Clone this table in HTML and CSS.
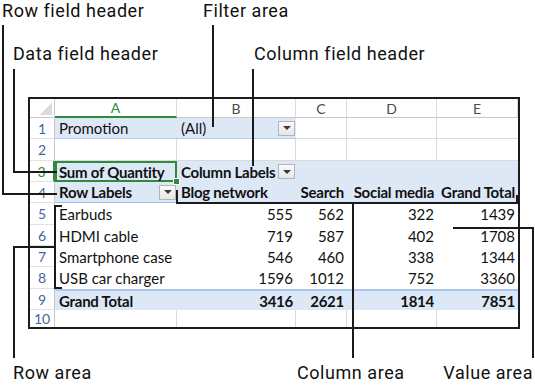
FILE: index.html
```html
<!DOCTYPE html>
<html>
<head>
<meta charset="utf-8">
<link rel="stylesheet" href="styles.css">
</head>
<body>
<div class="figure">
  <div class="sheet">
    <div class="corner"></div>
    <div class="hd hd-sel">A</div>
    <div class="hd">B</div>
    <div class="hd">C</div>
    <div class="hd">D</div>
    <div class="hd">E</div>

    <div class="rn">1</div>
    <div class="c pf">Promotion</div>
    <div class="c pf split"><span>(All)</span><span class="dd"></span></div>
    <div class="c g"></div>
    <div class="c g"></div>
    <div class="c g"></div>

    <div class="rn">2</div>
    <div class="c g"></div>
    <div class="c g"></div>
    <div class="c g"></div>
    <div class="c g"></div>
    <div class="c g"></div>

    <div class="rn rn-sel">3</div>
    <div class="c ph b active">Sum of Quantity<span class="handle"></span></div>
    <div class="c ph b split"><span>Column Labels</span><span class="dd"></span></div>
    <div class="c ph"></div>
    <div class="c ph"></div>
    <div class="c ph"></div>

    <div class="rn">4</div>
    <div class="c ph ph4 b split"><span>Row Labels</span><span class="dd"></span></div>
    <div class="c ph ph4 b">Blog network</div>
    <div class="c ph ph4 b num">Search</div>
    <div class="c ph ph4 b num">Social media</div>
    <div class="c ph ph4 b num">Grand Total</div>

    <div class="rn">5</div>
    <div class="c">Earbuds</div>
    <div class="c num">555</div>
    <div class="c num">562</div>
    <div class="c num">322</div>
    <div class="c num">1439</div>

    <div class="rn">6</div>
    <div class="c">HDMI cable</div>
    <div class="c num">719</div>
    <div class="c num">587</div>
    <div class="c num">402</div>
    <div class="c num">1708</div>

    <div class="rn">7</div>
    <div class="c">Smartphone case</div>
    <div class="c num">546</div>
    <div class="c num">460</div>
    <div class="c num">338</div>
    <div class="c num">1344</div>

    <div class="rn">8</div>
    <div class="c">USB car charger</div>
    <div class="c num">1596</div>
    <div class="c num">1012</div>
    <div class="c num">752</div>
    <div class="c num">3360</div>

    <div class="rn">9</div>
    <div class="c gt b">Grand Total</div>
    <div class="c gt b num">3416</div>
    <div class="c gt b num">2621</div>
    <div class="c gt b num">1814</div>
    <div class="c gt b num">7851</div>

    <div class="rn rn-last">10</div>
    <div class="c g g-last"></div>
    <div class="c g g-last"></div>
    <div class="c g g-last"></div>
    <div class="c g g-last"></div>
    <div class="c g g-last"></div>
  </div>

  <div class="lbl lbl-rfh">Row field header</div>
  <div class="lbl lbl-fa">Filter area</div>
  <div class="lbl lbl-dfh">Data field header</div>
  <div class="lbl lbl-cfh">Column field header</div>
  <div class="lbl lbl-ra">Row area</div>
  <div class="lbl lbl-ca">Column area</div>
  <div class="lbl lbl-va">Value area</div>

  <div class="ln ln-rfh"></div>
  <div class="ln ln-fa"></div>
  <div class="ln ln-dfh"></div>
  <div class="ln ln-cfh"></div>
  <div class="ln ln-ra-br"></div>
  <div class="ln ln-ra"></div>
  <div class="ln ln-ca-br"></div>
  <div class="ln ln-ca"></div>
  <div class="ln ln-va"></div>
</div>
</body>
</html>
```

FILE: styles.css
```css
html, body {
  margin: 0;
  padding: 0;
  background: #ffffff;
}

.figure {
  position: relative;
  width: 535px;
  height: 386px;
  box-sizing: border-box;
  padding: 97px 0 0 28px;
  overflow: hidden;
  background: #ffffff;
}

/* ---------- spreadsheet ---------- */
.sheet {
  display: grid;
  grid-template-columns: 25px 122px 119px 51px 90px 81px;
  grid-template-rows: 19px 21px 22px 21px 21px 22px 21px 21px 22px 21px 17px;
  width: 492px;
  height: 232px;
  box-sizing: border-box;
  border: 2px solid #1c1c1c;
  font-family: Lato, "Liberation Sans", sans-serif;
  font-size: 15px;
  color: #111111;
  background: #ffffff;
}

.sheet > div {
  box-sizing: border-box;
  white-space: nowrap;
  overflow: hidden;
}

.corner {
  border-right: 1px solid #c8c8c8;
  border-bottom: 1px solid #c8c8c8;
  background: linear-gradient(135deg, transparent 50%, #dcdcdc 50%) no-repeat right 2px bottom 2px / 13px 13px;
}

.hd {
  display: flex;
  align-items: center;
  justify-content: center;
  border-right: 1px solid #dcdcdc;
  border-bottom: 1px solid #c8c8c8;
  color: #4a4a4a;
  font-size: 14px;
}

.hd-sel {
  color: #2e8b3e;
  border-bottom: 2px solid #2e8b3e;
}

.rn {
  display: flex;
  align-items: center;
  justify-content: center;
  border-right: 1px solid #c8c8c8;
  border-bottom: 1px solid #e2e2e2;
  color: #3f67a0;
  font-size: 14px;
}

.rn-sel {
  color: #2e8b3e;
  border-right: 2px solid #2e8b3e;
}

.rn-last {
  border-bottom: 0;
}

.c {
  display: flex;
  align-items: center;
  padding: 0 3px 0 4px;
  line-height: 18px;
}

.num {
  justify-content: flex-end;
}

.b {
  font-weight: 700;
  letter-spacing: -0.25px;
}

.g {
  border-right: 1px solid #dadada;
  border-bottom: 1px solid #dadada;
}

.g-last {
  border-bottom: 0;
}

.sheet > .g:nth-child(6n) {
  border-right: 0;
}

.pf {
  background: #dde8f6;
  border-bottom: 1px solid #b3c9e8;
}

.ph {
  background: #dde8f6;
}

.ph4 {
  border-bottom: 1px solid #9dbbe3;
}

.gt {
  background: #dde8f6;
  border-top: 2px solid #a9c7ef;
}

.split {
  justify-content: space-between;
  padding-right: 1px;
}

.dd {
  width: 17px;
  height: 15px;
  box-sizing: border-box;
  border: 1px solid #b4b4b4;
  background: linear-gradient(#fbfbfb, #e6e6e6);
  display: flex;
  align-items: center;
  justify-content: center;
  flex: none;
}

.dd::after {
  content: "";
  width: 0;
  height: 0;
  border-left: 4px solid transparent;
  border-right: 4px solid transparent;
  border-top: 4px solid #3a3a3a;
}

.sheet > .active {
  position: relative;
  overflow: visible;
  z-index: 2;
  box-shadow: inset 0 0 0 2px #2e8b3e;
}

.handle {
  position: absolute;
  right: -3px;
  bottom: -3px;
  width: 5px;
  height: 5px;
  background: #2e8b3e;
  border: 1px solid #ffffff;
}

/* ---------- callout labels ---------- */
.lbl {
  position: absolute;
  font-family: Roboto, "Liberation Sans", sans-serif;
  font-size: 18px;
  letter-spacing: 0.55px;
  line-height: 20px;
  color: #111111;
  white-space: nowrap;
  z-index: 5;
}

.lbl-rfh { left: 2px; top: 1px; }
.lbl-fa  { left: 203px; top: 1px; }
.lbl-dfh { left: 13px; top: 44px; }
.lbl-cfh { left: 254px; top: 44px; }
.lbl-ra  { left: 13px; top: 363px; }
.lbl-ca  { left: 297px; top: 363px; }
.lbl-va  { right: 2px; top: 363px; }

/* ---------- callout lines ---------- */
.ln {
  position: absolute;
  box-sizing: border-box;
  border: 0 solid #1a1a1a;
  z-index: 6;
}

.ln-rfh {
  left: 2px; top: 25px; width: 55px; height: 170px;
  border-left-width: 2px; border-bottom-width: 2px;
}

.ln-dfh {
  left: 13px; top: 69px; width: 44px; height: 104px;
  border-left-width: 2px; border-bottom-width: 2px;
}

.ln-fa {
  left: 212px; top: 25px; width: 2px; height: 102px;
  border-left-width: 2px;
}

.ln-cfh {
  left: 252px; top: 69px; width: 2px; height: 97px;
  border-left-width: 2px;
}

.ln-ra-br {
  left: 54px; top: 205px; width: 8px; height: 84px;
  border-left-width: 2px; border-top-width: 2px; border-bottom-width: 2px;
}

.ln-ra {
  left: 13px; top: 246px; width: 42px; height: 112px;
  border-left-width: 2px; border-top-width: 2px;
}

.ln-ca-br {
  left: 176px; top: 190px; width: 342px; height: 14px;
  border-left-width: 2px; border-bottom-width: 2px;
}

.ln-ca-br::after {
  content: "";
  position: absolute;
  right: 0;
  bottom: 0;
  width: 2px;
  height: 7px;
  background: #1a1a1a;
}

.ln-ca {
  left: 352px; top: 204px; width: 2px; height: 154px;
  border-left-width: 2px;
}

.ln-va {
  left: 453px; top: 227px; width: 81px; height: 131px;
  border-top-width: 2px; border-right-width: 2px;
}
```
